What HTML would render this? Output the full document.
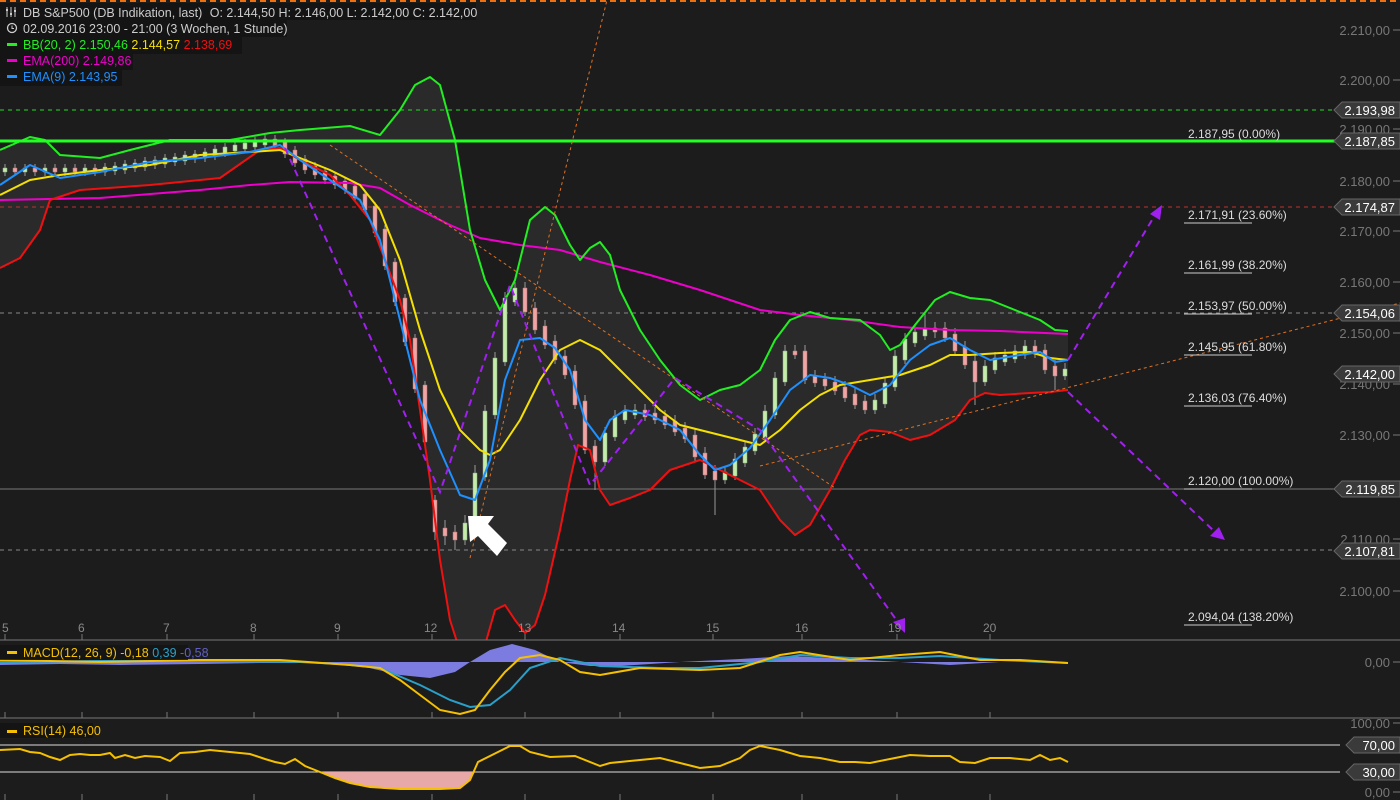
<!DOCTYPE html>
<html><head><meta charset="utf-8"><style>
html,body{margin:0;padding:0;background:#1c1c1c;width:1400px;height:800px;overflow:hidden}
svg{display:block;font-family:"Liberation Sans",sans-serif}
</style></head><body>
<svg width="1400" height="800" viewBox="0 0 1400 800" xmlns="http://www.w3.org/2000/svg">
<rect width="1400" height="800" fill="#1c1c1c"/>
<line x1="0" y1="1" x2="1400" y2="1" stroke="#f07010" stroke-width="2" stroke-dasharray="6,4"/>
<defs><clipPath id="mp"><rect x="0" y="0" width="1340" height="640"/></clipPath></defs>
<g clip-path="url(#mp)">
<polygon fill="#2a2a2a" points="0,150 30,137 45,140 60,155 100,158 130,150 170,140 230,140 270,133 300,130 350,126 380,135 400,110 415,85 430,77 440,85 455,140 470,230 485,280 500,310 515,280 530,220 545,207 555,215 570,245 580,260 590,248 600,242 610,255 620,290 640,330 660,360 680,385 700,400 720,390 740,385 760,370 775,340 790,320 810,312 830,318 860,320 880,335 890,350 900,345 915,325 935,300 950,292 970,298 990,300 1020,312 1040,320 1055,330 1068,331 1068,390 1050,392 1030,393 1000,395 985,393 970,400 955,420 930,435 910,440 890,432 870,430 860,435 845,460 830,490 810,525 795,535 780,520 760,490 740,480 720,470 700,460 670,470 650,490 630,498 610,505 600,490 590,450 578,445 570,480 560,530 545,595 535,625 525,633 515,620 505,605 495,610 485,645 458,645 450,620 440,560 430,480 420,410 410,340 400,300 385,260 370,220 350,195 330,175 300,160 280,148 260,150 220,178 150,185 80,190 50,200 40,230 20,258 0,268"/>
</g>
<line x1="0" y1="110" x2="1340" y2="110" stroke="#22dd22" stroke-width="1" stroke-dasharray="4,4"/>
<line x1="0" y1="207" x2="1340" y2="207" stroke="#c03030" stroke-width="1" stroke-dasharray="4,4"/>
<line x1="0" y1="313" x2="1340" y2="313" stroke="#888" stroke-width="1" stroke-dasharray="4,4"/>
<line x1="0" y1="489" x2="1340" y2="489" stroke="#777" stroke-width="1"/>
<line x1="0" y1="550" x2="1340" y2="550" stroke="#888" stroke-width="1" stroke-dasharray="4,4"/>
<!-- candles -->
<path fill="none" stroke="#999" stroke-width="1" d="M5 164V176M15 164V176M25 164V176M35 164V176M45 164V176M55 164V176M65 164V176M75 164V176M85 164V176M95 164V176M105 163V176M115 162V175M125 160V174M135 159V172M145 157V171M155 156V169M165 154V168M175 153V166M185 151V165M195 150V163M205 148V162M215 145V160M225 143V157M235 141V155M245 139V153M255 137V151M265 135V149M275 135V150M285 138V158M295 146V167M305 155V174M315 162V179M325 167V184M335 172V189M345 177V194M355 182V202M365 190V214M375 202V237M385 225V270M395 258V306M405 294V346M415 334V393M425 381V446M435 495V540M445 520V545M455 525V550M465 515V545M475 465V531M485 405V481M495 352V419M505 292V366M515 282V306M525 282V316M535 302V334M545 320V349M555 335V364M565 350V379M575 365V409M585 395V454M595 440V490M605 427V466M615 410V441M625 405V424M635 404V419M645 404V421M655 407V424M665 410V429M675 415V436M685 422V443M695 429V461M705 447V479M715 465V515M725 466V484M735 453V480M745 441V467M755 428V455M765 405V442M775 372V419M785 345V386M795 345V359M805 345V384M815 370V387M825 373V390M835 376V395M845 381V402M855 388V409M865 395V414M875 394V414M885 377V408M895 350V391M905 333V364M915 326V347M925 312V340M935 322V338M945 322V342M955 328V355M965 341V369M975 355V405M985 360V386M995 352V374M1005 349V366M1015 345V363M1025 340V359M1035 340V358M1045 344V374M1055 360V390M1065 363V380"/>
<path fill="#c4eca8" stroke="#8a8" stroke-width=".5" d="M3 168h4V172h-4ZM23 168h4V172h-4ZM43 168h4V172h-4ZM63 168h4V172h-4ZM83 168h4V172h-4ZM103 167h4V172h-4ZM113 166h4V171h-4ZM123 164h4V170h-4ZM133 163h4V168h-4ZM143 161h4V167h-4ZM153 160h4V165h-4ZM163 158h4V164h-4ZM173 157h4V162h-4ZM183 155h4V161h-4ZM193 154h4V159h-4ZM203 152h4V158h-4ZM213 149h4V156h-4ZM223 147h4V153h-4ZM233 145h4V151h-4ZM243 143h4V149h-4ZM253 141h4V147h-4ZM263 139h4V145h-4ZM463 523h4V540h-4ZM473 473h4V527h-4ZM483 411h4V477h-4ZM493 358h4V415h-4ZM503 298h4V362h-4ZM513 288h4V302h-4ZM603 433h4V462h-4ZM613 416h4V437h-4ZM623 411h4V420h-4ZM633 410h4V415h-4ZM723 472h4V480h-4ZM733 459h4V476h-4ZM743 447h4V463h-4ZM753 434h4V451h-4ZM763 411h4V438h-4ZM773 378h4V415h-4ZM783 351h4V382h-4ZM873 400h4V410h-4ZM883 383h4V404h-4ZM893 356h4V387h-4ZM903 339h4V360h-4ZM913 332h4V343h-4ZM923 328h4V336h-4ZM983 366h4V382h-4ZM993 358h4V370h-4ZM1003 355h4V362h-4ZM1013 351h4V359h-4ZM1023 346h4V355h-4ZM1063 369h4V376h-4Z"/>
<path fill="#f0a4a4" stroke="#a77" stroke-width=".5" d="M13 168h4V172h-4ZM33 168h4V172h-4ZM53 168h4V172h-4ZM73 168h4V172h-4ZM93 168h4V172h-4ZM273 139h4V146h-4ZM283 142h4V154h-4ZM293 150h4V163h-4ZM303 159h4V170h-4ZM313 166h4V175h-4ZM323 171h4V180h-4ZM333 176h4V185h-4ZM343 181h4V190h-4ZM353 186h4V198h-4ZM363 194h4V210h-4ZM373 206h4V233h-4ZM383 229h4V266h-4ZM393 262h4V302h-4ZM403 298h4V342h-4ZM413 338h4V389h-4ZM423 385h4V442h-4ZM433 500h4V532h-4ZM443 528h4V536h-4ZM453 532h4V540h-4ZM523 288h4V312h-4ZM533 308h4V330h-4ZM543 326h4V345h-4ZM553 341h4V360h-4ZM563 356h4V375h-4ZM573 371h4V405h-4ZM583 401h4V450h-4ZM593 446h4V462h-4ZM643 410h4V417h-4ZM653 413h4V420h-4ZM663 416h4V425h-4ZM673 421h4V432h-4ZM683 428h4V439h-4ZM693 435h4V457h-4ZM703 453h4V475h-4ZM713 471h4V480h-4ZM793 351h4V355h-4ZM803 351h4V380h-4ZM813 376h4V383h-4ZM823 379h4V386h-4ZM833 382h4V391h-4ZM843 387h4V398h-4ZM853 394h4V405h-4ZM863 401h4V410h-4ZM933 328h4V332h-4ZM943 328h4V338h-4ZM953 334h4V351h-4ZM963 347h4V365h-4ZM973 361h4V382h-4ZM1033 346h4V354h-4ZM1043 350h4V370h-4ZM1053 366h4V376h-4Z"/>
<g clip-path="url(#mp)" fill="none" stroke-width="2" stroke-linejoin="round">
<polyline stroke="#ee00cc" points="0,200 100,198 200,190 250,185 290,182 350,183 380,188 410,205 450,225 480,238 520,245 560,250 600,262 650,275 700,290 760,310 800,315 850,320 900,327 950,330 1000,331 1068,334"/>
<polyline stroke="#22ee22" points="0,150 30,137 45,140 60,155 100,158 130,150 170,140 230,140 270,133 300,130 350,126 380,135 400,110 415,85 430,77 440,85 455,140 470,230 485,280 500,310 515,280 530,220 545,207 555,215 570,245 580,260 590,248 600,242 610,255 620,290 640,330 660,360 680,385 700,400 720,390 740,385 760,370 775,340 790,320 810,312 830,318 860,320 880,335 890,350 900,345 915,325 935,300 950,292 970,298 990,300 1020,312 1040,320 1055,330 1068,331"/>
<polyline stroke="#ee1111" points="0,268 20,258 40,230 50,200 80,190 150,185 220,178 260,150 280,148 300,160 330,175 350,195 370,220 385,260 400,300 410,340 420,410 430,480 440,560 450,620 458,645 485,645 495,610 505,605 515,620 525,633 535,625 545,595 560,530 570,480 578,445 590,450 600,490 610,505 630,498 650,490 670,470 700,460 720,470 740,480 760,490 780,520 795,535 810,525 830,490 845,460 860,435 870,430 890,432 910,440 930,435 955,420 970,400 985,393 1000,395 1030,393 1050,392 1068,390"/>
<polyline stroke="#f5e000" points="0,195 30,180 60,175 100,170 150,165 200,155 250,152 280,150 300,158 330,170 360,185 380,210 400,260 420,330 440,390 460,430 480,450 490,455 500,450 520,420 540,380 560,350 580,340 600,350 620,370 640,390 660,410 680,425 700,430 720,435 740,440 760,445 780,430 800,410 820,395 840,385 870,380 900,375 930,365 950,355 970,355 1000,353 1030,352 1050,358 1068,360"/>
<polyline stroke="#1e90ff" points="0,185 30,165 60,178 100,172 150,162 200,158 250,152 280,145 300,160 330,180 360,200 380,240 400,320 420,400 440,450 460,495 475,500 490,460 505,380 520,340 540,338 555,348 570,370 585,420 600,440 610,420 625,410 650,415 680,430 700,455 715,470 730,465 750,448 770,420 790,390 810,375 830,378 850,385 870,395 890,385 910,360 930,345 950,338 970,350 990,360 1020,355 1040,352 1055,362 1068,360"/>
</g>
<line x1="0" y1="141" x2="1340" y2="141" stroke="#22ff22" stroke-width="3"/>
<g stroke="#e07020" stroke-width="1" stroke-dasharray="3,3" fill="none">
<line x1="470" y1="558" x2="607" y2="0"/>
<line x1="330" y1="145" x2="835" y2="488"/>
<line x1="760" y1="466" x2="1400" y2="303"/>
</g>
<g stroke="#a020f0" stroke-width="2" stroke-dasharray="7,5" fill="none">
<polyline points="285,148 440,492 510,285 590,485 675,378 760,430 900,625"/>
<line x1="1068" y1="360" x2="1155" y2="215"/>
<line x1="1068" y1="392" x2="1215" y2="532"/>
</g>
<g fill="#a020f0">
<polygon points="905,633 893,622 905,618"/>
<polygon points="1162,205 1150,214 1160,220"/>
<polygon points="1225,540 1210,536 1219,527"/>
</g>
<polygon fill="#fff" points="468,516 494,516 488,524 507,543 497,556 478,536 470,542"/>
<g fill="#ddd" font-size="12">
<text x="1188" y="138">2.187,95 (0.00%)</text>
<text x="1188" y="219">2.171,91 (23.60%)</text>
<text x="1188" y="269">2.161,99 (38.20%)</text>
<text x="1188" y="310">2.153,97 (50.00%)</text>
<text x="1188" y="351">2.145,95 (61.80%)</text>
<text x="1188" y="402">2.136,03 (76.40%)</text>
<text x="1188" y="485">2.120,00 (100.00%)</text>
<text x="1188" y="621">2.094,04 (138.20%)</text>
</g>
<g stroke="#ccc" stroke-width="1">
<line x1="1184" y1="223" x2="1252" y2="223"/><line x1="1184" y1="273" x2="1252" y2="273"/><line x1="1184" y1="314" x2="1252" y2="314"/><line x1="1184" y1="355" x2="1252" y2="355"/><line x1="1184" y1="406" x2="1252" y2="406"/><line x1="1184" y1="489" x2="1252" y2="489"/><line x1="1184" y1="625" x2="1252" y2="625"/>
</g>
<g fill="#777" font-size="13" text-anchor="end">
<text x="1390" y="35">2.210,00</text><text x="1390" y="85">2.200,00</text><text x="1390" y="134">2.190,00</text><text x="1390" y="186">2.180,00</text><text x="1390" y="236">2.170,00</text><text x="1390" y="287">2.160,00</text><text x="1390" y="338">2.150,00</text><text x="1390" y="389">2.140,00</text><text x="1390" y="440">2.130,00</text><text x="1390" y="544">2.110,00</text><text x="1390" y="596">2.100,00</text>
<text x="1390" y="667">0,00</text><text x="1390" y="728">100,00</text><text x="1390" y="797">0,00</text>
</g>
<g stroke="#777"><line x1="1393" y1="30" x2="1400" y2="30"/><line x1="1393" y1="80" x2="1400" y2="80"/><line x1="1393" y1="129" x2="1400" y2="129"/><line x1="1393" y1="181" x2="1400" y2="181"/><line x1="1393" y1="231" x2="1400" y2="231"/><line x1="1393" y1="282" x2="1400" y2="282"/><line x1="1393" y1="333" x2="1400" y2="333"/><line x1="1393" y1="384" x2="1400" y2="384"/><line x1="1393" y1="435" x2="1400" y2="435"/><line x1="1393" y1="539" x2="1400" y2="539"/><line x1="1393" y1="591" x2="1400" y2="591"/><line x1="1393" y1="662" x2="1400" y2="662"/><line x1="1393" y1="723" x2="1400" y2="723"/><line x1="1393" y1="792" x2="1400" y2="792"/></g>
<!-- price tags -->
<g fill="#3a3a3a" stroke="#666">
<polygon points="1334,110 1342,102 1400,102 1400,118 1342,118"/>
<polygon points="1334,141 1342,133 1400,133 1400,149 1342,149"/>
<polygon points="1334,207 1342,199 1400,199 1400,215 1342,215"/>
<polygon points="1334,313 1342,305 1400,305 1400,321 1342,321"/>
<polygon points="1334,374 1342,366 1400,366 1400,382 1342,382"/>
<polygon points="1334,489 1342,481 1400,481 1400,497 1342,497"/>
<polygon points="1334,551 1342,543 1400,543 1400,559 1342,559"/>
<polygon points="1346,745 1354,737 1400,737 1400,753 1354,753"/>
<polygon points="1346,772 1354,764 1400,764 1400,780 1354,780"/>
</g>
<g fill="#fff" font-size="13" text-anchor="end">
<text x="1395" y="115">2.193,98</text><text x="1395" y="146">2.187,85</text><text x="1395" y="212">2.174,87</text><text x="1395" y="318">2.154,06</text><text x="1395" y="379">2.142,00</text><text x="1395" y="494">2.119,85</text><text x="1395" y="556">2.107,81</text><text x="1395" y="750">70,00</text><text x="1395" y="777">30,00</text>
</g>
<line x1="0" y1="640" x2="1400" y2="640" stroke="#777"/>
<line x1="0" y1="718" x2="1400" y2="718" stroke="#777"/>
<g fill="#888" font-size="12">
<text x="2" y="632">5</text><text x="78" y="632">6</text><text x="163" y="632">7</text><text x="250" y="632">8</text><text x="334" y="632">9</text><text x="424" y="632">12</text><text x="518" y="632">13</text><text x="612" y="632">14</text><text x="706" y="632">15</text><text x="795" y="632">16</text><text x="888" y="632">19</text><text x="983" y="632">20</text>
</g>
<path stroke="#777" d="M5 634V640M82 634V640M167 634V640M254 634V640M338 634V640M432 634V640M525 634V640M620 634V640M713 634V640M802 634V640M897 634V640M990 634V640M5 712V718M82 712V718M167 712V718M254 712V718M338 712V718M432 712V718M525 712V718M620 712V718M713 712V718M802 712V718M897 712V718M990 712V718M5 794V800M82 794V800M167 794V800M254 794V800M338 794V800M432 794V800M525 794V800M620 794V800M713 794V800M802 794V800M897 794V800M990 794V800"/>
<line x1="0" y1="745" x2="1340" y2="745" stroke="#ddd"/>
<line x1="0" y1="772" x2="1340" y2="772" stroke="#ddd"/>
<polygon fill="#e8a8a8" points="320,772 335,778 350,783 370,787 400,789 420,789 440,789 460,788 470,780 475,772"/>
<polyline fill="none" stroke="#f5c000" stroke-width="2" points="0,750 20,749 30,752 40,753 50,757 60,760 70,755 80,754 90,755 100,755 110,753 115,758 125,755 135,758 145,756 160,757 170,761 180,753 195,752 210,750 230,752 250,754 265,759 275,762 285,764 295,759 305,766 320,772 335,778 350,783 370,787 400,789 420,789 440,789 460,788 470,780 478,762 500,751 510,746 520,746 530,752 550,757 575,756 600,766 610,763 640,760 660,758 680,763 700,768 720,766 740,758 750,750 760,746 780,750 800,756 820,758 840,762 855,762 870,763 890,759 910,755 930,756 950,756 960,762 975,763 990,758 1010,758 1030,760 1040,755 1050,760 1060,758 1068,762"/>
<path fill="#7b7be0" d="M0 662L0 665L60 664L120 665L200 664L260 663L330 663L365 667L400 675L430 678L455 672L470 662L490 650L512 644L535 650L560 662L590 666L620 666L680 662L740 659L790 656L850 659L900 662L950 665L1000 662L1068 662Z"/>
<polyline fill="none" stroke="#2aa0c8" stroke-width="2" points="0,662 100,661 200,661 300,662 340,664 380,668 420,685 450,700 470,707 490,705 510,690 530,668 560,658 600,666 660,668 700,668 760,662 800,655 850,658 900,658 940,656 1000,660 1068,663"/>
<polyline fill="none" stroke="#f5c000" stroke-width="2" points="0,660 100,662 200,660 280,660 350,665 380,668 400,680 420,695 440,710 460,714 475,710 490,690 505,672 520,658 540,655 560,660 580,672 600,675 640,668 700,670 740,668 780,655 800,652 850,660 900,655 940,652 980,660 1020,660 1068,663"/>
<g font-size="12.5">
<rect x="0" y="3" width="476" height="17" fill="#141414"/>
<rect x="0" y="20" width="287" height="17" fill="#141414"/>
<rect x="0" y="37" width="242" height="17" fill="#141414"/>
<rect x="0" y="53" width="133" height="17" fill="#141414"/>
<rect x="0" y="69" width="122" height="17" fill="#141414"/>
<path d="M7 7V17M11 7V17M15 7V17" stroke="#ccc" stroke-width="1"/><path d="M6 10h2M10 14h2M14 11h2" stroke="#ccc" stroke-width="2"/>
<text x="23" y="17" fill="#ccc">DB S&amp;P500 (DB Indikation, last)  <tspan dx="4">O: 2.144,50  H: 2.146,00  L: 2.142,00  C: 2.142,00</tspan></text>
<circle cx="12" cy="28" r="4.5" fill="none" stroke="#ccc" stroke-width="1.3"/><path d="M12 25.5V28.5H14" stroke="#ccc" fill="none"/>
<text x="23" y="33" fill="#ccc">02.09.2016 23:00 - 21:00 (3 Wochen, 1 Stunde)</text>
<rect x="7" y="43" width="10" height="3" fill="#22ee22"/><text x="23" y="49" fill="#22ee22">BB(20, 2)  2.150,46 <tspan fill="#f5e000">2.144,57</tspan> <tspan fill="#ee1111">2.138,69</tspan></text>
<rect x="7" y="59" width="10" height="3" fill="#ee00cc"/><text x="23" y="65" fill="#ee00cc">EMA(200)  2.149,86</text>
<rect x="7" y="75" width="10" height="3" fill="#1e90ff"/><text x="23" y="81" fill="#1e90ff">EMA(9)  2.143,95</text>
<rect x="0" y="645" width="188" height="15" fill="#141414" opacity=".8"/>
<rect x="7" y="651" width="10" height="3" fill="#f5c000"/><text x="23" y="657" fill="#f5c000">MACD(12, 26, 9)  -0,18 <tspan fill="#2aa0c8">0,39</tspan> <tspan fill="#6060c0">-0,58</tspan></text>
<rect x="0" y="723" width="93" height="15" fill="#141414"/>
<rect x="7" y="730" width="10" height="3" fill="#f5c000"/><text x="23" y="735" fill="#f5c000">RSI(14)  46,00</text>
</g>
</svg>
</body></html>
